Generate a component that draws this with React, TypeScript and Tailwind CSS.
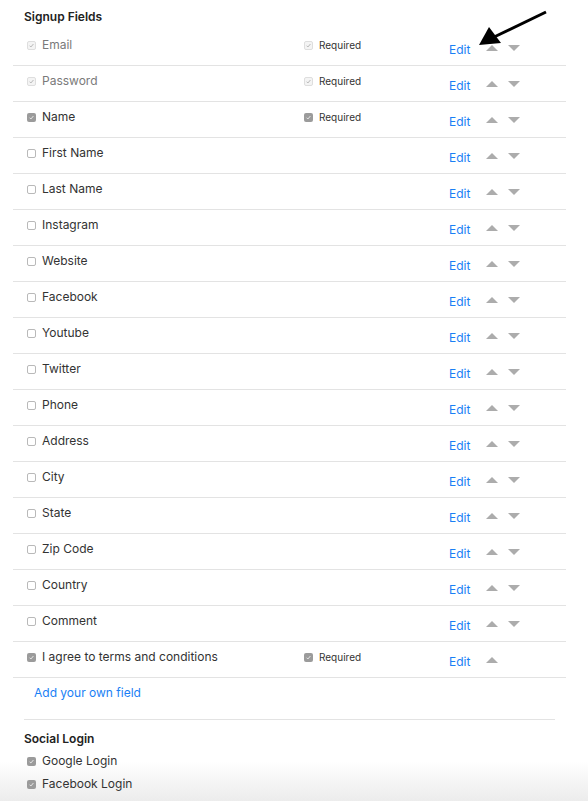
import React from "react";

type Field = {
  label: string;
  checked: boolean;
  locked?: boolean;
  required?: boolean;
  requiredLocked?: boolean;
  down?: boolean;
};

const fields: Field[] = [
  { label: "Email", checked: true, locked: true, required: true, requiredLocked: true, down: true },
  { label: "Password", checked: true, locked: true, required: true, requiredLocked: true, down: true },
  { label: "Name", checked: true, required: true, down: true },
  { label: "First Name", checked: false, down: true },
  { label: "Last Name", checked: false, down: true },
  { label: "Instagram", checked: false, down: true },
  { label: "Website", checked: false, down: true },
  { label: "Facebook", checked: false, down: true },
  { label: "Youtube", checked: false, down: true },
  { label: "Twitter", checked: false, down: true },
  { label: "Phone", checked: false, down: true },
  { label: "Address", checked: false, down: true },
  { label: "City", checked: false, down: true },
  { label: "State", checked: false, down: true },
  { label: "Zip Code", checked: false, down: true },
  { label: "Country", checked: false, down: true },
  { label: "Comment", checked: false, down: true },
  { label: "I agree to terms and conditions", checked: true, required: true, down: false },
];

function Box({ checked, locked }: { checked: boolean; locked?: boolean }) {
  if (!checked) {
    return <span className="inline-block w-[9px] h-[9px] rounded-[2px] border border-[#b9b9b9] bg-white shrink-0" />;
  }
  if (locked) {
    return (
      <span className="inline-flex items-center justify-center w-[9px] h-[9px] rounded-[2px] border border-[#dedede] bg-[#f4f4f4] shrink-0">
        <svg width="7" height="7" viewBox="0 0 8 8">
          <path d="M1.8 4.2 L3.3 5.7 L6.2 2.3" fill="none" stroke="#b5b5b5" strokeWidth="1.1" />
        </svg>
      </span>
    );
  }
  return (
    <span className="inline-flex items-center justify-center w-[9px] h-[9px] rounded-[2px] bg-[#9b9b9b] shrink-0">
      <svg width="7" height="7" viewBox="0 0 8 8">
        <path d="M1.8 4.2 L3.3 5.7 L6.2 2.3" fill="none" stroke="#e8e8e8" strokeWidth="1.1" />
      </svg>
    </span>
  );
}

function Up() {
  return (
    <svg width="12" height="6" viewBox="0 0 12 6" className="block">
      <path d="M0 6 L6 0 L12 6 Z" fill="#acacac" />
    </svg>
  );
}
function Down() {
  return (
    <svg width="12" height="6" viewBox="0 0 12 6" className="block">
      <path d="M0 0 L12 0 L6 6 Z" fill="#acacac" />
    </svg>
  );
}

export default function App() {
  return (
    <div
      className="relative w-[588px] h-[801px] overflow-hidden bg-white text-[12px] text-[#333]"
      style={{ fontFamily: "Inter, 'Liberation Sans', sans-serif" }}
    >
      <div className="absolute left-0 right-0 bottom-0 h-[40px] bg-gradient-to-b from-white to-[#ececec]" />

      <div className="relative pl-[13px] pt-[9px] w-[566px]">
        <div className="pl-[11px] font-semibold text-[#222] leading-4 h-[21px]">Signup Fields</div>
        {fields.map((f, i) => (
          <div key={i} className="flex h-9 border-b border-[#e3e3e3]">
            <div className="w-[291px] pl-[14px] pt-[7px] flex items-start">
              <div className="flex items-center gap-[6px] h-4">
                <Box checked={f.checked} locked={f.locked} />
                <span className={f.locked ? "text-[#7a7a7a]" : "text-[#333]"}>{f.label}</span>
              </div>
            </div>
            <div className="w-[145px] pt-[7px]">
              {f.required && (
                <div className="flex items-center gap-[6px] h-4">
                  <Box checked locked={f.requiredLocked} />
                  <span className="text-[10px] text-[#333]">Required</span>
                </div>
              )}
            </div>
            <div className="pt-[12px] w-[37px]">
              <span className="text-[#1a7ff5] leading-4 block">Edit</span>
            </div>
            <div className="pt-[15px] flex gap-[10px]">
              <Up />
              {f.down && <Down />}
            </div>
          </div>
        ))}
        <div className="pl-[21px] pt-[7px] h-[41px] text-[#1a7ff5] leading-4">Add your own field</div>
        <div className="ml-[11px] w-[531px] border-t border-[#e3e3e3]" />
        <div className="pl-[11px] pt-[11px] font-semibold text-[#222] leading-4">Social Login</div>
        <div className="pl-[14px] pt-[6px] flex items-center gap-[6px] h-[22px]">
          <Box checked />
          <span>Google Login</span>
        </div>
        <div className="pl-[14px] pt-[6px] flex items-center gap-[6px] h-[24px]">
          <Box checked />
          <span>Facebook Login</span>
        </div>
      </div>

      <svg className="absolute left-0 top-0 pointer-events-none" width="588" height="801">
        <line x1="546" y1="12" x2="492" y2="38" stroke="#000" strokeWidth="3" />
        <path d="M479 45 L489 27 L501 43 Z" fill="#000" />
      </svg>
    </div>
  );
}
